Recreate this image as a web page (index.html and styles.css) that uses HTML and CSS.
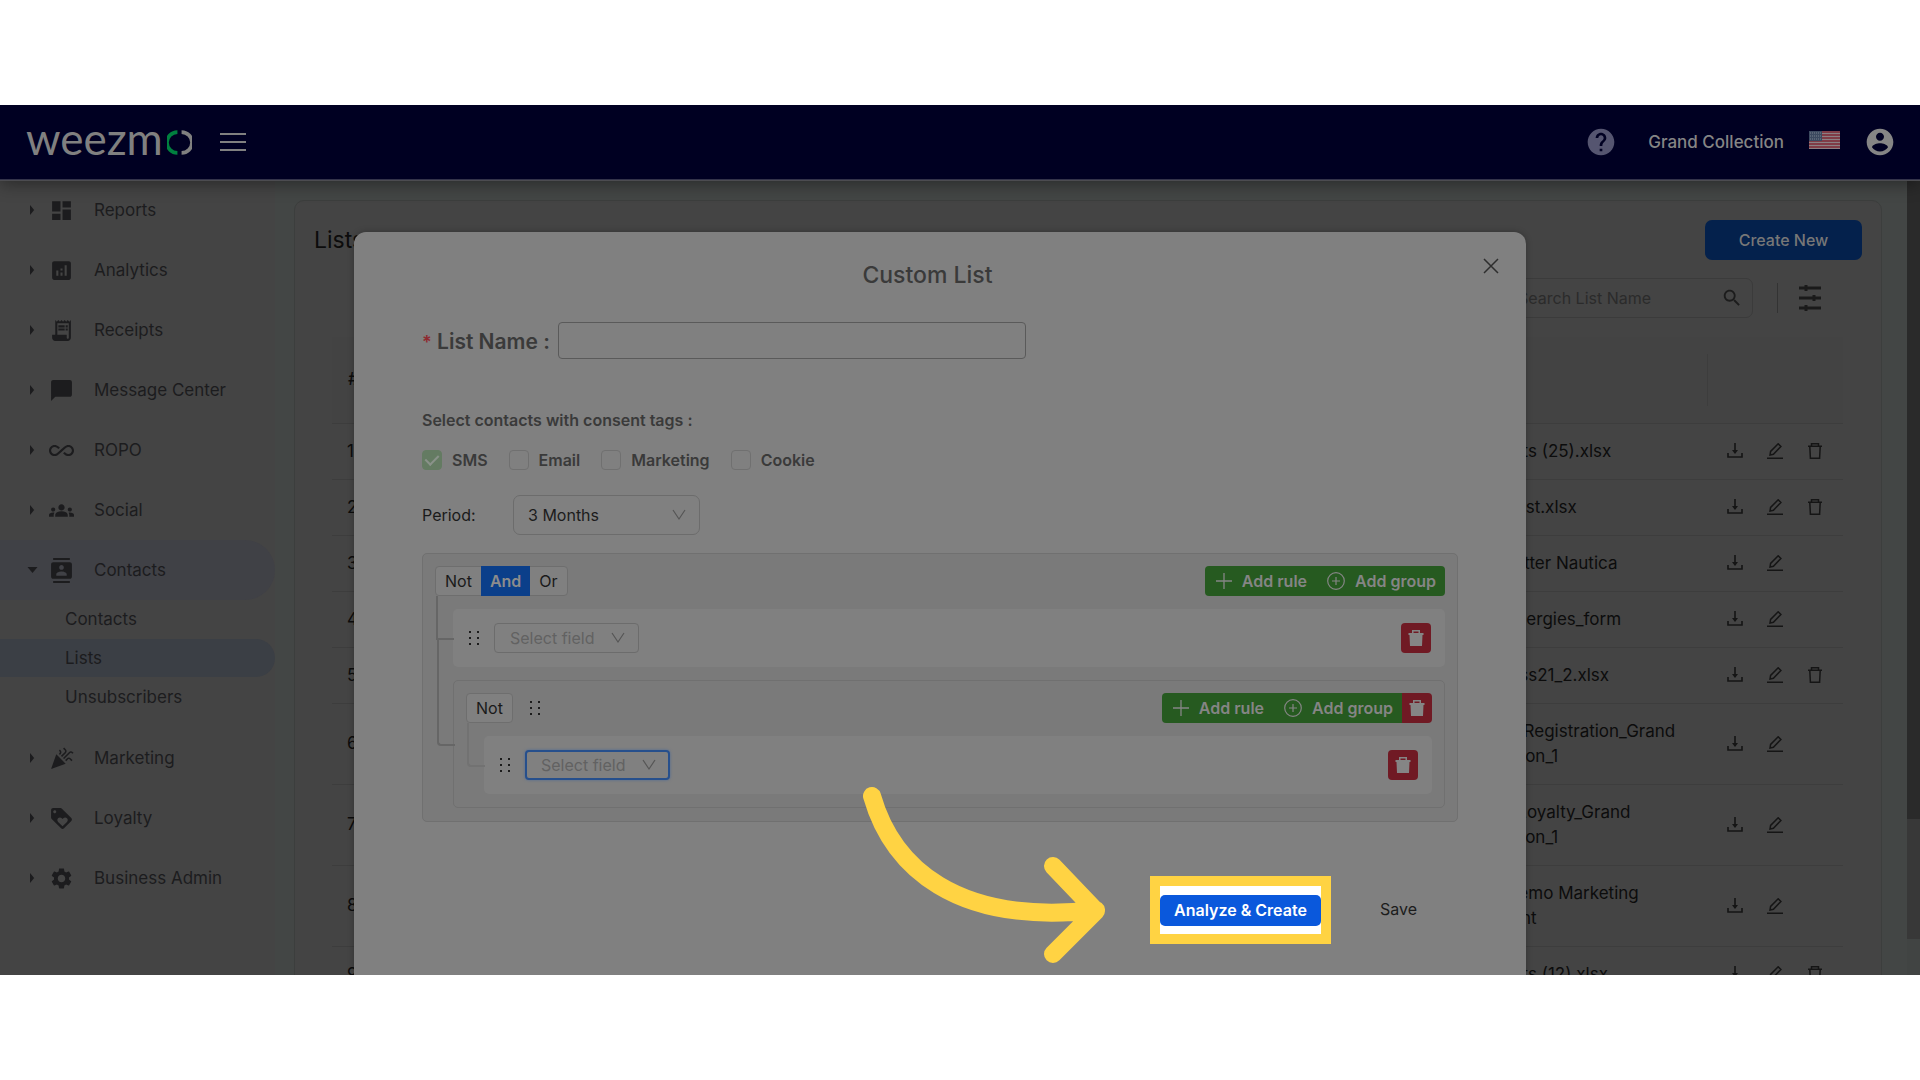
FILE: index.html
```html
<!DOCTYPE html>
<html lang="en">
<head>
<meta charset="utf-8">
<title>Weezmo – Lists</title>
<link rel="stylesheet" href="styles.css">
</head>
<body>
<svg class="sprite" aria-hidden="true">
  <symbol id="i-dashboard" viewBox="0 0 24 24"><path d="M3 13h8V3H3v10zm0 8h8v-6H3v6zm10 0h8V11h-8v10zm0-18v6h8V3h-8z"/></symbol>
  <symbol id="i-analytics" viewBox="0 0 24 24"><path d="M19 3H5c-1.1 0-2 .9-2 2v14c0 1.1.9 2 2 2h14c1.1 0 2-.9 2-2V5c0-1.1-.9-2-2-2zM9 17H7v-5h2v5zm4 0h-2v-3h2v3zm0-5h-2v-2h2v2zm4 5h-2V7h2v10z"/></symbol>
  <symbol id="i-receipt" viewBox="0 0 24 24"><path d="M19.5 3.5L18 2l-1.5 1.5L15 2l-1.500 1.500L12 2l-1.500 1.500L9 2 7.500 3.500 6 2v14H3v3c0 1.660 1.340 3 3 3h12c1.660 0 3-1.340 3-3V2l-1.500 1.500zM19 19c0 .55-.45 1-1 1s-1-.45-1-1v-3H8V5h11v14zM9 7h6v2H9zM16 7h2v2h-2zM9 10h6v2H9zM16 10h2v2h-2z"/></symbol>
  <symbol id="i-chat" viewBox="0 0 24 24"><path d="M20 2H4c-1.1 0-2 .9-2 2v18l4-4h14c1.1 0 2-.9 2-2V4c0-1.1-.9-2-2-2z"/></symbol>
  <symbol id="i-infinite" viewBox="0 0 24 24"><path d="M18.6 6.62c-1.44 0-2.8.56-3.77 1.53L12 10.66 10.48 12h.01L7.8 14.39c-.64.64-1.49.99-2.4.99-1.87 0-3.39-1.51-3.39-3.38S3.53 8.62 5.4 8.62c.91 0 1.76.35 2.44 1.03l1.13 1 1.51-1.34L9.22 8.2C8.2 7.18 6.84 6.62 5.4 6.62 2.42 6.62 0 9.04 0 12s2.42 5.38 5.4 5.38c1.44 0 2.8-.56 3.77-1.53l2.83-2.5.01.01L13.52 12h-.01l2.69-2.39c.64-.64 1.49-.99 2.4-.99 1.87 0 3.39 1.51 3.39 3.38s-1.52 3.38-3.39 3.38c-.9 0-1.76-.35-2.44-1.03l-1.14-1.01-1.51 1.34 1.27 1.12c1.02 1.01 2.37 1.57 3.82 1.57 2.98 0 5.4-2.41 5.4-5.38s-2.42-5.37-5.4-5.37z"/></symbol>
  <symbol id="i-groups" viewBox="0 0 24 24"><path d="M12 12.75c1.63 0 3.07.39 4.24.9 1.08.48 1.76 1.56 1.76 2.73V18H6v-1.61c0-1.18.68-2.26 1.76-2.73 1.17-.52 2.61-.91 4.24-.91zM4 13c1.1 0 2-.9 2-2s-.9-2-2-2-2 .9-2 2 .9 2 2 2zm1.13 1.1c-.37-.06-.74-.1-1.13-.1-.99 0-1.93.21-2.78.58C.48 14.9 0 15.62 0 16.43V18h4.5v-1.61c0-.83.23-1.61.63-2.29zM20 13c1.1 0 2-.9 2-2s-.9-2-2-2-2 .9-2 2 .9 2 2 2zm4 3.43c0-.81-.48-1.53-1.22-1.85-.85-.37-1.79-.58-2.78-.58-.39 0-.76.04-1.13.1.4.68.63 1.46.63 2.29V18H24v-1.57zM12 6c1.66 0 3 1.34 3 3s-1.34 3-3 3-3-1.34-3-3 1.34-3 3-3z"/></symbol>
  <symbol id="i-contacts" viewBox="0 0 24 24"><path d="M20 0H4v2h16V0zM4 24h16v-2H4v2zM20 4H4c-1.1 0-2 .9-2 2v12c0 1.1.9 2 2 2h16c1.1 0 2-.9 2-2V6c0-1.1-.9-2-2-2zm-8 2.750c1.240 0 2.250 1.010 2.250 2.250s-1.010 2.250-2.250 2.250S9.750 10.240 9.750 9 10.760 6.750 12 6.750zM17 17H7v-1.500c0-1.670 3.330-2.500 5-2.500s5 .83 5 2.500V17z"/></symbol>
  <symbol id="i-party" viewBox="0 0 24 24"><path d="M2 22l14-5-9-9zM14.530 12.530l5.590-5.590c.49-.49 1.280-.49 1.770 0l.59.59 1.060-1.060-.59-.59c-1.070-1.070-2.820-1.070-3.890 0l-5.590 5.590zM10.060 6.880l-.59.59 1.060 1.060.59-.59c1.070-1.070 1.070-2.820 0-3.890l-.59-.59-1.060 1.070.59.59c.48.48.48 1.280 0 1.760zM17.060 11.880l-1.590 1.590 1.060 1.060 1.590-1.590c.49-.49 1.280-.49 1.770 0l1.610 1.610 1.060-1.060-1.610-1.610c-1.080-1.070-2.820-1.070-3.900 0zM15.060 5.880l-3.590 3.590 1.060 1.060 3.590-3.590c1.070-1.070 1.070-2.820 0-3.890l-1.590-1.590-1.060 1.060 1.590 1.590c.48.49.48 1.290 0 1.770z"/></symbol>
  <symbol id="i-loyalty" viewBox="0 0 24 24"><path d="M21.410 11.580l-9-9C12.050 2.220 11.550 2 11 2H4c-1.100 0-2 .9-2 2v7c0 .55.22 1.050.59 1.420l9 9c.36.36.86.58 1.410.58.55 0 1.050-.22 1.410-.59l7-7c.37-.36.59-.86.59-1.410 0-.55-.23-1.060-.59-1.420zM5.500 7C4.670 7 4 6.330 4 5.500S4.670 4 5.500 4 7 4.670 7 5.500 6.330 7 5.500 7zm11.770 8.270L13 19.540l-4.270-4.270C8.280 14.810 8 14.190 8 13.500c0-1.380 1.120-2.500 2.500-2.500.69 0 1.320.28 1.770.74l.73.72.73-.73c.45-.45 1.080-.73 1.770-.73 1.380 0 2.500 1.120 2.500 2.500 0 .69-.28 1.320-.73 1.770z"/></symbol>
  <symbol id="i-gear" viewBox="0 0 24 24"><path d="M19.140 12.940c.04-.3.06-.61.06-.94 0-.32-.02-.64-.07-.94l2.030-1.580c.18-.14.23-.41.12-.61l-1.920-3.320c-.12-.22-.37-.29-.59-.22l-2.390.96c-.5-.38-1.030-.7-1.620-.94l-.36-2.540c-.04-.24-.24-.41-.48-.41h-3.840c-.24 0-.43.17-.47.41l-.36 2.540c-.59.24-1.130.57-1.620.94l-2.390-.96c-.22-.08-.47 0-.59.22L2.740 8.870c-.12.21-.08.47.12.61l2.030 1.580c-.05.3-.09.63-.09.94s.02.64.07.94l-2.030 1.580c-.18.14-.23.41-.12.61l1.920 3.320c.12.22.37.29.59.22l2.390-.96c.5.38 1.030.7 1.620.94l.36 2.540c.05.24.24.41.48.41h3.840c.24 0 .44-.17.47-.41l.36-2.540c.59-.24 1.130-.56 1.620-.94l2.390.96c.22.08.47 0 .59-.22l1.920-3.320c.12-.22.07-.47-.12-.61l-2.010-1.580zM12 15.600c-1.980 0-3.600-1.620-3.600-3.600s1.620-3.600 3.600-3.600 3.600 1.620 3.600 3.600-1.620 3.600-3.600 3.600z"/></symbol>
  <symbol id="i-help" viewBox="0 0 24 24"><path d="M12 2C6.480 2 2 6.480 2 12s4.480 10 10 10 10-4.480 10-10S17.520 2 12 2zm1 17h-2v-2h2v2zm2.070-7.750l-.9.92C13.450 12.900 13 13.500 13 15h-2v-.5c0-1.100.45-2.100 1.170-2.830l1.240-1.260c.37-.36.59-.86.59-1.410 0-1.100-.9-2-2-2s-2 .9-2 2H8c0-2.210 1.790-4 4-4s4 1.790 4 4c0 .88-.36 1.680-.93 2.250z"/></symbol>
  <symbol id="i-account" viewBox="0 0 24 24"><path d="M12 2C6.480 2 2 6.480 2 12s4.480 10 10 10 10-4.480 10-10S17.520 2 12 2zm0 3c1.660 0 3 1.340 3 3s-1.340 3-3 3-3-1.340-3-3 1.340-3 3-3zm0 14.200c-2.500 0-4.710-1.280-6-3.220.03-1.990 4-3.080 6-3.080 1.990 0 5.970 1.090 6 3.080-1.290 1.940-3.500 3.220-6 3.220z"/></symbol>
  <symbol id="i-search" viewBox="0 0 24 24"><path d="M15.500 14h-.79l-.28-.27C15.410 12.590 16 11.110 16 9.500 16 5.910 13.090 3 9.500 3S3 5.910 3 9.500 5.910 16 9.500 16c1.610 0 3.090-.59 4.230-1.570l.27.28v.79l5 4.990L20.490 19l-4.990-5zm-6 0C7.010 14 5 11.990 5 9.500S7.010 5 9.500 5 14 7.010 14 9.500 11.990 14 9.500 14z"/></symbol>
  <symbol id="i-right" viewBox="0 0 6 12"><path d="M0 0l5 6-5 6z"/></symbol>
  <symbol id="i-down" viewBox="0 0 10 6"><path d="M0 0h10L5 6z"/></symbol>
  <symbol id="i-chevron" viewBox="0 0 14 12"><path d="M1 1l6 9 6-9" fill="none" stroke="currentColor" stroke-width="1.2"/></symbol>
  <symbol id="i-download" viewBox="0 0 16 16"><path d="M8 0v10M1 10v4h14v-4" fill="none" stroke="currentColor" stroke-width="1.6"/><path d="M5 7h6l-3 4z"/></symbol>
  <symbol id="i-edit" viewBox="0 0 16 16"><path d="M0 15.200h16M3 12l.6-3.600L11.200.8l2.700 2.700-7.500 7.700z" fill="none" stroke="currentColor" stroke-width="1.5"/></symbol>
  <symbol id="i-trash" viewBox="0 0 16 16"><path d="M1 3.300h14M4.500 3V.8h7V3M2.800 3.500l.6 11.700h9.200l.6-11.700" fill="none" stroke="currentColor" stroke-width="1.500"/></symbol>
  <symbol id="i-bin" viewBox="0 0 16 16"><path d="M4 3V0h8v3h3.500v2h-1L14 16H2L1.500 5h-1V3zm1.500 0h5V1.500h-5z"/></symbol>
  <symbol id="i-plus" viewBox="0 0 16 16"><path d="M8 0v16M0 8h16" fill="none" stroke="currentColor" stroke-width="1.300"/></symbol>
  <symbol id="i-plus-circle" viewBox="0 0 18 18"><path d="M9 5v8M5 9h8M17.300 9A8.300 8.300 0 1 1 .7 9a8.300 8.300 0 0 1 16.600 0z" fill="none" stroke="currentColor" stroke-width="1.200"/></symbol>
  <symbol id="i-handle" viewBox="0 0 12 16"><path d="M1 1h2v2H1zM9 1h2v2H9zM1 7h2v2H1zM9 7h2v2H9zM1 13h2v2H1zM9 13h2v2H9z"/></symbol>
</svg>

<div class="stage">
  <header class="topbar">
    <a class="logo" href="#" aria-label="weezmo">weezm<svg class="logo-o" viewBox="0 0 24 24"><path d="M10 2A10 10 0 0 0 10 22" stroke="#00803f"/><path d="M14 2A10 10 0 0 1 14 22" stroke="#808080"/></svg></a>
    <button class="burger" type="button" aria-label="Toggle menu"><span></span><span></span><span></span></button>
    <div class="topbar-right">
      <button class="icon-btn help" type="button" aria-label="Help"><svg><use href="#i-help"/></svg></button>
      <span class="account-name">Grand Collection</span>
      <svg class="flag" viewBox="0 0 31 18" role="img" aria-label="English (US)">
        <rect width="31" height="18" fill="#8b7f83"/>
        <path d="M0 1h31M0 4h31M0 7h31M0 10h31M0 13h31M0 16h31" stroke="#7e2734" stroke-width="1.500"/>
        <rect width="13" height="10" fill="#3c4a60"/>
        <path d="M1 2h12M1 5h12M1 8h12" stroke="#77808c" stroke-width="1" stroke-dasharray="1 1"/>
      </svg>
      <button class="icon-btn" type="button" aria-label="Account"><svg><use href="#i-account"/></svg></button>
    </div>
  </header>

  <div class="workspace">
    <nav class="sidebar">
      <a class="nav-item" href="#"><svg class="caret"><use href="#i-right"/></svg><svg class="nav-icon"><use href="#i-dashboard"/></svg>Reports</a>
      <a class="nav-item" href="#"><svg class="caret"><use href="#i-right"/></svg><svg class="nav-icon"><use href="#i-analytics"/></svg>Analytics</a>
      <a class="nav-item" href="#"><svg class="caret"><use href="#i-right"/></svg><svg class="nav-icon"><use href="#i-receipt"/></svg>Receipts</a>
      <a class="nav-item" href="#"><svg class="caret"><use href="#i-right"/></svg><svg class="nav-icon"><use href="#i-chat"/></svg>Message Center</a>
      <a class="nav-item" href="#"><svg class="caret"><use href="#i-right"/></svg><svg class="nav-icon"><use href="#i-infinite"/></svg>ROPO</a>
      <a class="nav-item" href="#"><svg class="caret"><use href="#i-right"/></svg><svg class="nav-icon"><use href="#i-groups"/></svg>Social</a>
      <a class="nav-item open" href="#"><svg class="caret"><use href="#i-down"/></svg><svg class="nav-icon"><use href="#i-contacts"/></svg>Contacts</a>
      <div class="subnav">
        <a href="#">Contacts</a>
        <a class="current" href="#">Lists</a>
        <a href="#">Unsubscribers</a>
      </div>
      <a class="nav-item" href="#"><svg class="caret"><use href="#i-right"/></svg><svg class="nav-icon"><use href="#i-party"/></svg>Marketing</a>
      <a class="nav-item" href="#"><svg class="caret"><use href="#i-right"/></svg><svg class="nav-icon"><use href="#i-loyalty"/></svg>Loyalty</a>
      <a class="nav-item" href="#"><svg class="caret"><use href="#i-right"/></svg><svg class="nav-icon"><use href="#i-gear"/></svg>Business Admin</a>
    </nav>

    <main class="content">
      <section class="card">
        <div class="card-head">
          <h1>Lists</h1>
          <button class="create" type="button">Create New</button>
        </div>
        <div class="card-tools">
          <div class="search"><input type="text" placeholder="Search List Name" aria-label="Search List Name"><svg><use href="#i-search"/></svg></div>
          <span class="divider"></span>
          <button class="filter" type="button" aria-label="Filters"><svg viewBox="0 0 24 26"><path d="M1 3h22M1 13h22M1 23h22" stroke-width="3"/><path d="M8 0v6M16 10v6M8 20v6" stroke-width="3"/></svg></button>
        </div>
        <table class="lists">
          <colgroup><col class="c-num"><col><col class="c-file"><col class="c-act"></colgroup>
          <thead><tr><th>#</th><th></th><th></th><th class="actions-head"></th></tr></thead>
          <tbody>
            <tr><td>1</td><td></td><td>Contacts (25).xlsx</td><td><div class="acts"><svg><use href="#i-download"/></svg><svg><use href="#i-edit"/></svg><svg><use href="#i-trash"/></svg></div></td></tr>
            <tr><td>2</td><td></td><td>RFM Test.xlsx</td><td><div class="acts"><svg><use href="#i-download"/></svg><svg><use href="#i-edit"/></svg><svg><use href="#i-trash"/></svg></div></td></tr>
            <tr><td>3</td><td></td><td>Newsletter Nautica</td><td><div class="acts"><svg><use href="#i-download"/></svg><svg><use href="#i-edit"/></svg></div></td></tr>
            <tr><td>4</td><td></td><td>New Energies_form</td><td><div class="acts"><svg><use href="#i-download"/></svg><svg><use href="#i-edit"/></svg></div></td></tr>
            <tr><td>5</td><td></td><td>Business21_2.xlsx</td><td><div class="acts"><svg><use href="#i-download"/></svg><svg><use href="#i-edit"/></svg><svg><use href="#i-trash"/></svg></div></td></tr>
            <tr><td>6</td><td></td><td>Events Registration_Grand<br>Collection_1</td><td><div class="acts"><svg><use href="#i-download"/></svg><svg><use href="#i-edit"/></svg></div></td></tr>
            <tr><td>7</td><td></td><td>Brand Loyalty_Grand<br>Collection_1</td><td><div class="acts"><svg><use href="#i-download"/></svg><svg><use href="#i-edit"/></svg></div></td></tr>
            <tr><td>8</td><td></td><td>New Demo Marketing<br>Segment</td><td><div class="acts"><svg><use href="#i-download"/></svg><svg><use href="#i-edit"/></svg></div></td></tr>
            <tr><td>9</td><td></td><td>Contacts (12).xlsx</td><td><div class="acts"><svg><use href="#i-download"/></svg><svg><use href="#i-edit"/></svg><svg><use href="#i-trash"/></svg></div></td></tr>
          </tbody>
        </table>
      </section>
    </main>
    <div class="scrollbar" aria-hidden="true"><span class="thumb"></span><span class="track"></span><span class="rest"></span></div>
  </div>

  <div class="modal-layer">
    <div class="modal" role="dialog" aria-labelledby="modal-title">
      <div class="modal-head">
        <h2 id="modal-title">Custom List</h2>
        <button class="close" type="button" aria-label="Close"><svg viewBox="0 0 16 16"><path d="M1 1l14 14M15 1L1 15"/></svg></button>
      </div>

      <div class="name-row">
        <label for="list-name"><span class="req">*</span> List Name :</label>
        <input id="list-name" type="text">
      </div>

      <fieldset class="consent">
        <legend>Select contacts with consent tags :</legend>
        <div class="checks">
          <label><input type="checkbox" checked>SMS</label>
          <label><input type="checkbox">Email</label>
          <label><input type="checkbox">Marketing</label>
          <label><input type="checkbox">Cookie</label>
        </div>
      </fieldset>

      <div class="period">
        <label for="period">Period:</label>
        <div class="select select-period"><select id="period"><option>3 Months</option></select><svg><use href="#i-chevron"/></svg></div>
      </div>

      <div class="group">
        <div class="group-head">
          <div class="conj"><button type="button">Not</button><button class="on" type="button">And</button><button type="button">Or</button></div>
          <div class="adders">
            <button class="add" type="button"><svg class="p"><use href="#i-plus"/></svg>Add rule</button>
            <button class="add last" type="button"><svg><use href="#i-plus-circle"/></svg>Add group</button>
          </div>
        </div>
        <div class="children">
          <div class="rule">
            <svg class="handle"><use href="#i-handle"/></svg>
            <div class="select select-field"><select aria-label="Field"><option>Select field</option></select><svg><use href="#i-chevron"/></svg></div>
            <button class="del" type="button" aria-label="Delete rule"><svg><use href="#i-bin"/></svg></button>
          </div>
          <div class="group nested">
            <div class="group-head">
              <div class="conj"><button type="button">Not</button></div>
              <svg class="handle"><use href="#i-handle"/></svg>
              <div class="adders">
                <button class="add" type="button"><svg class="p"><use href="#i-plus"/></svg>Add rule</button>
                <button class="add" type="button"><svg><use href="#i-plus-circle"/></svg>Add group</button>
                <button class="del" type="button" aria-label="Delete group"><svg><use href="#i-bin"/></svg></button>
              </div>
            </div>
            <div class="children">
              <div class="rule">
                <svg class="handle"><use href="#i-handle"/></svg>
                <div class="select select-field focused"><select aria-label="Field"><option>Select field</option></select><svg><use href="#i-chevron"/></svg></div>
                <button class="del" type="button" aria-label="Delete rule"><svg><use href="#i-bin"/></svg></button>
              </div>
            </div>
          </div>
        </div>
      </div>

      <div class="modal-foot">
        <div class="spotlight">
          <button class="analyze" type="button">Analyze &amp; Create</button>
          <svg class="arrow" viewBox="860 780 250 190" aria-hidden="true"><path d="M872 795C892 865 955 925 1096 909M1053 865L1096 910L1053 953"/></svg>
        </div>
        <button class="save" type="button">Save</button>
      </div>
    </div>
  </div>
</div>
</body>
</html>
```
FILE: styles.css
```css
* { box-sizing: border-box; }

body {
  margin: 0;
  min-height: 100vh;
  padding: 105px 0;
  background: #fff;
  color: #0c0c0c;
  font: 16px/24px Inter, "Liberation Sans", sans-serif;
}

button, input, select { font: inherit; color: inherit; margin: 0; }
button { padding: 0; border: 0; background: none; }
a { color: inherit; text-decoration: none; }
svg { display: block; flex: none; fill: currentColor; }
.sprite { position: absolute; width: 0; height: 0; }

.stage {
  position: relative;
  display: flex;
  flex-direction: column;
  height: calc(100vh - 210px);
  overflow: hidden;
  background: #444;
}

/* Top bar */
.topbar {
  position: relative;
  z-index: 1;
  display: flex;
  align-items: center;
  flex: none;
  height: 75px;
  padding: 0 24px 0 26px;
  background: #000022;
  border-bottom: 1px solid #33334a;
  color: #858585;
  box-shadow: 0 1px 0 #4c4c50, 0 4px 16px rgba(0, 0, 0, .4);
}
.logo {
  display: flex;
  align-items: center;
  gap: 4px;
  height: 44px;
  padding-bottom: 8px;
  font: 44px/44px Lato, sans-serif;
  color: #808080;
}
.logo-o { width: 25px; height: 25px; margin-top: 8px; fill: none; stroke-width: 3.5; }
.burger { display: flex; flex-direction: column; gap: 6px; width: 26px; margin-left: 28px; }
.burger span { height: 2px; background: #808080; }
.topbar-right { display: flex; align-items: center; margin-left: auto; font-size: 17px; }
.icon-btn svg { width: 32px; height: 32px; }
.help { color: #555570; }
.account-name { margin: 0 25px 0 31px; font-weight: 500; }
.flag { width: 31px; height: 18px; margin: 0 24px 4px 0; }

/* Side navigation */
.workspace { display: flex; flex: 1; min-height: 0; font-size: 17px; }
.sidebar { flex: none; width: 275px; color: #1c1c1e; }
.nav-item { display: flex; align-items: center; height: 60px; padding-left: 27px; }
.nav-item.open { background: #404146; border-radius: 0 30px 30px 0; }
.caret { width: 11px; height: 10px; margin-right: 11px; }
.open .caret { height: 6px; }
.nav-icon { width: 25px; height: 25px; margin-right: 20px; }
.subnav { display: flex; flex-direction: column; gap: 1px; padding: 0 0 12px; }
.subnav a { height: 38px; padding-left: 65px; line-height: 38px; }
.subnav .current { background: #3b3f45; border-radius: 0 19px 19px 0; }

/* Lists card */
.content { flex: 1; min-width: 0; padding: 20px 25px 0 19px; background: #434645; }
.card {
  height: 900px;
  padding: 19px 19px 0;
  background: #444;
  border: 1px solid #3c3e3d;
  border-radius: 10px;
}
.card-head { display: flex; align-items: center; justify-content: space-between; }
.card-head h1 { margin: 0; font-size: 23px; font-weight: 400; }
.create { width: 157px; height: 40px; border-radius: 7px; background: #04214c; color: #777; font-size: 16px; font-weight: 500; }
.card-tools { display: flex; align-items: center; justify-content: flex-end; gap: 20px; padding: 18px 40px 0 0; }
.search { position: relative; width: 256px; }
.search input {
  width: 100%;
  height: 40px;
  padding: 0 44px 0 20px;
  background: transparent;
  border: 1px solid #3b3b3b;
  border-radius: 7px;
  font-size: 16px;
}
.search input::placeholder { color: #2b2b2b; opacity: 1; }
.search svg { position: absolute; right: 10px; top: 9px; width: 22px; height: 22px; color: #1c1c1c; }
.divider { width: 1px; height: 30px; margin-left: 4px; background: #333; }
.filter svg { width: 24px; height: 26px; stroke: #1a1a1a; }

.lists { width: calc(100% - 37px); margin: 19px 0 0 18px; border-collapse: collapse; table-layout: fixed; line-height: 25px; }
.c-num { width: 60px; }
.c-file { width: 257px; }
.c-act { width: 136px; }
.lists th { height: 86px; padding: 0 16px; text-align: left; background: #434343; font-weight: 500; }
.lists .actions-head { background: linear-gradient(#3d3d3d, #3d3d3d) 0 50% / 1px 52px no-repeat #434343; }
.lists tr { border-bottom: 1px solid #3d3d3d; }
.lists td { padding: 15px; white-space: nowrap; }
.acts { display: flex; gap: 24px; padding-left: 5px; color: #151515; }
.acts svg { width: 16px; height: 16px; }

.scrollbar { display: flex; flex-direction: column; flex: none; width: 13px; background: #414443; }
.thumb { flex: 638; background: #2a2a2a; }
.track { flex: 120; background: #383838; }
.rest { flex: 36; }

/* Dialog */
.modal-layer {
  position: absolute;
  z-index: 2;
  inset: 127px 40px 0 0;
  display: flex;
  justify-content: center;
}
.modal {
  width: 1172px;
  padding: 0 68px;
  background: #808080;
  border-radius: 12px 12px 0 0;
  box-shadow: 0 0 6px rgba(0, 0, 0, .25);
}
.modal-head { position: relative; padding: 23px 25px 0 0; text-align: center; }
.modal-head h2 { margin: 0; font-size: 23px; line-height: 40px; font-weight: 500; color: #3a3a3a; }
.close { position: absolute; top: 26px; right: -41px; }
.close svg { width: 16px; height: 16px; fill: none; stroke: #2e2e2e; stroke-width: 1.5; }
.name-row { display: flex; align-items: center; margin-top: 27px; gap: 8px; }
.name-row label { padding-top: 3px; font-size: 21px; font-weight: 600; color: #3a3a3a; }
.req { font-size: 18px; color: #8f2a30; }
.name-row input { width: 468px; height: 37px; padding: 0 12px; background: #808080; border: 1px solid #5a5a5a; border-radius: 4px; }
.consent { margin: 49px 0 0; padding: 0; border: 0; font-weight: 600; color: #3a3a3a; }
.consent legend { padding: 0; }
.checks { display: flex; gap: 21px; margin-top: 16px; }
.checks label { display: flex; align-items: center; gap: 10px; }
.checks input {
  appearance: none;
  display: grid;
  place-items: center;
  width: 20px;
  height: 20px;
  border: 1px solid #707070;
  border-radius: 4px;
}
.checks input:checked { background: #647b62; border-color: #647b62; }
.checks input:checked::after {
  content: "";
  width: 6px;
  height: 11px;
  margin-bottom: 3px;
  border: solid #8a928a;
  border-width: 0 2px 2px 0;
  transform: rotate(45deg);
}
.period { display: flex; align-items: center; margin-top: 23px; }
.period label { width: 91px; color: #1a1a1a; }

.select { position: relative; }
.select select {
  appearance: none;
  width: 100%;
  height: 100%;
  padding: 0 14px;
  background: #808080;
  border: 1px solid #6c6c6c;
  border-radius: 7px;
}
.select svg { position: absolute; right: 14px; top: 50%; width: 14px; height: 12px; margin-top: -6px; color: #555; pointer-events: none; }
.select-period { width: 187px; height: 40px; color: #1c1c1c; }
.select-field { width: 145px; height: 30px; color: #626262; }
.select-field select { padding: 0 15px; border-radius: 4px; }
.focused select { border: 2px solid #264f8c; padding: 0 14px; box-shadow: 0 0 3px #4d6a95; }

/* Query builder */
.group {
  margin-top: 18px;
  padding: 12px 12px 13px;
  background: #7a7a7a;
  border: 1px solid #707070;
  border-radius: 5px;
}
.group-head { display: flex; align-items: center; height: 30px; }
.conj { display: flex; height: 30px; border: 1px solid #6e6e6e; border-radius: 4px; background: #808080; }
.conj button { padding: 0 9px; line-height: 24px; color: #1a1a1a; }
.conj .on { margin: -1px 0; padding: 0 9px; background: #0b3f8a; color: #8c8c8c; font-weight: 600; }
.adders { display: flex; margin-left: auto; }
.add {
  display: flex;
  align-items: center;
  gap: 10px;
  height: 30px;
  padding: 0 9px 0 11px;
  background: #265a20;
  color: #858585;
  font-weight: 600;
}
.add svg { width: 18px; height: 18px; }
.add .p { width: 16px; height: 16px; }
.add:first-child { border-radius: 4px 0 0 4px; }
.add.last { border-radius: 0 4px 4px 0; }
.del { display: grid; place-items: center; width: 30px; height: 30px; background: #701a24; border-radius: 4px; color: #858585; }
.del svg { width: 16px; height: 16px; }
.adders .del { border-radius: 0 4px 4px 0; }
.handle { width: 12px; height: 16px; color: #1c1c1c; }
.group-head .handle { margin-left: 16px; }
.children { display: flex; flex-direction: column; gap: 13px; margin: 13px 0 0 18px; }
.rule { position: relative; display: flex; align-items: center; height: 58px; padding: 0 14px 0 15px; background: #808080; border-radius: 5px; }
.rule .select { margin-left: 14px; }
.rule .del { margin-left: auto; }
.group.nested { position: relative; margin: 0; padding-right: 12px; }
.rule::before, .nested::before {
  content: "";
  position: absolute;
  left: -17px;
  width: 16px;
  border: solid #666;
  border-width: 0 0 2px 2px;
}
.rule::before { top: -13px; height: 42px; }
.nested::before { top: -43px; height: 106px; border-radius: 0 0 0 4px; }
.nested .rule::before { border-color: #727272; border-radius: 0 0 0 4px; }

/* Footer with the highlighted action */
.modal-foot { display: flex; align-items: center; justify-content: flex-end; gap: 33px; margin-top: 54px; padding-right: 25px; }
.spotlight { position: relative; padding: 9px 0 8px; border: 10px solid #ffd343; background: #fff; }
.analyze { display: block; width: 161px; height: 31px; padding-bottom: 2px; border-radius: 5px; background: #0a58dc; color: #fff; font-weight: 600; }
.save { padding: 0 16px 2px; color: #1c1c1c; }
.arrow {
  position: absolute;
  left: -300px;
  top: -105px;
  width: 250px;
  height: 190px;
  fill: none;
  stroke: #ffd343;
  stroke-width: 18;
  stroke-linecap: round;
  stroke-linejoin: round;
}
```
